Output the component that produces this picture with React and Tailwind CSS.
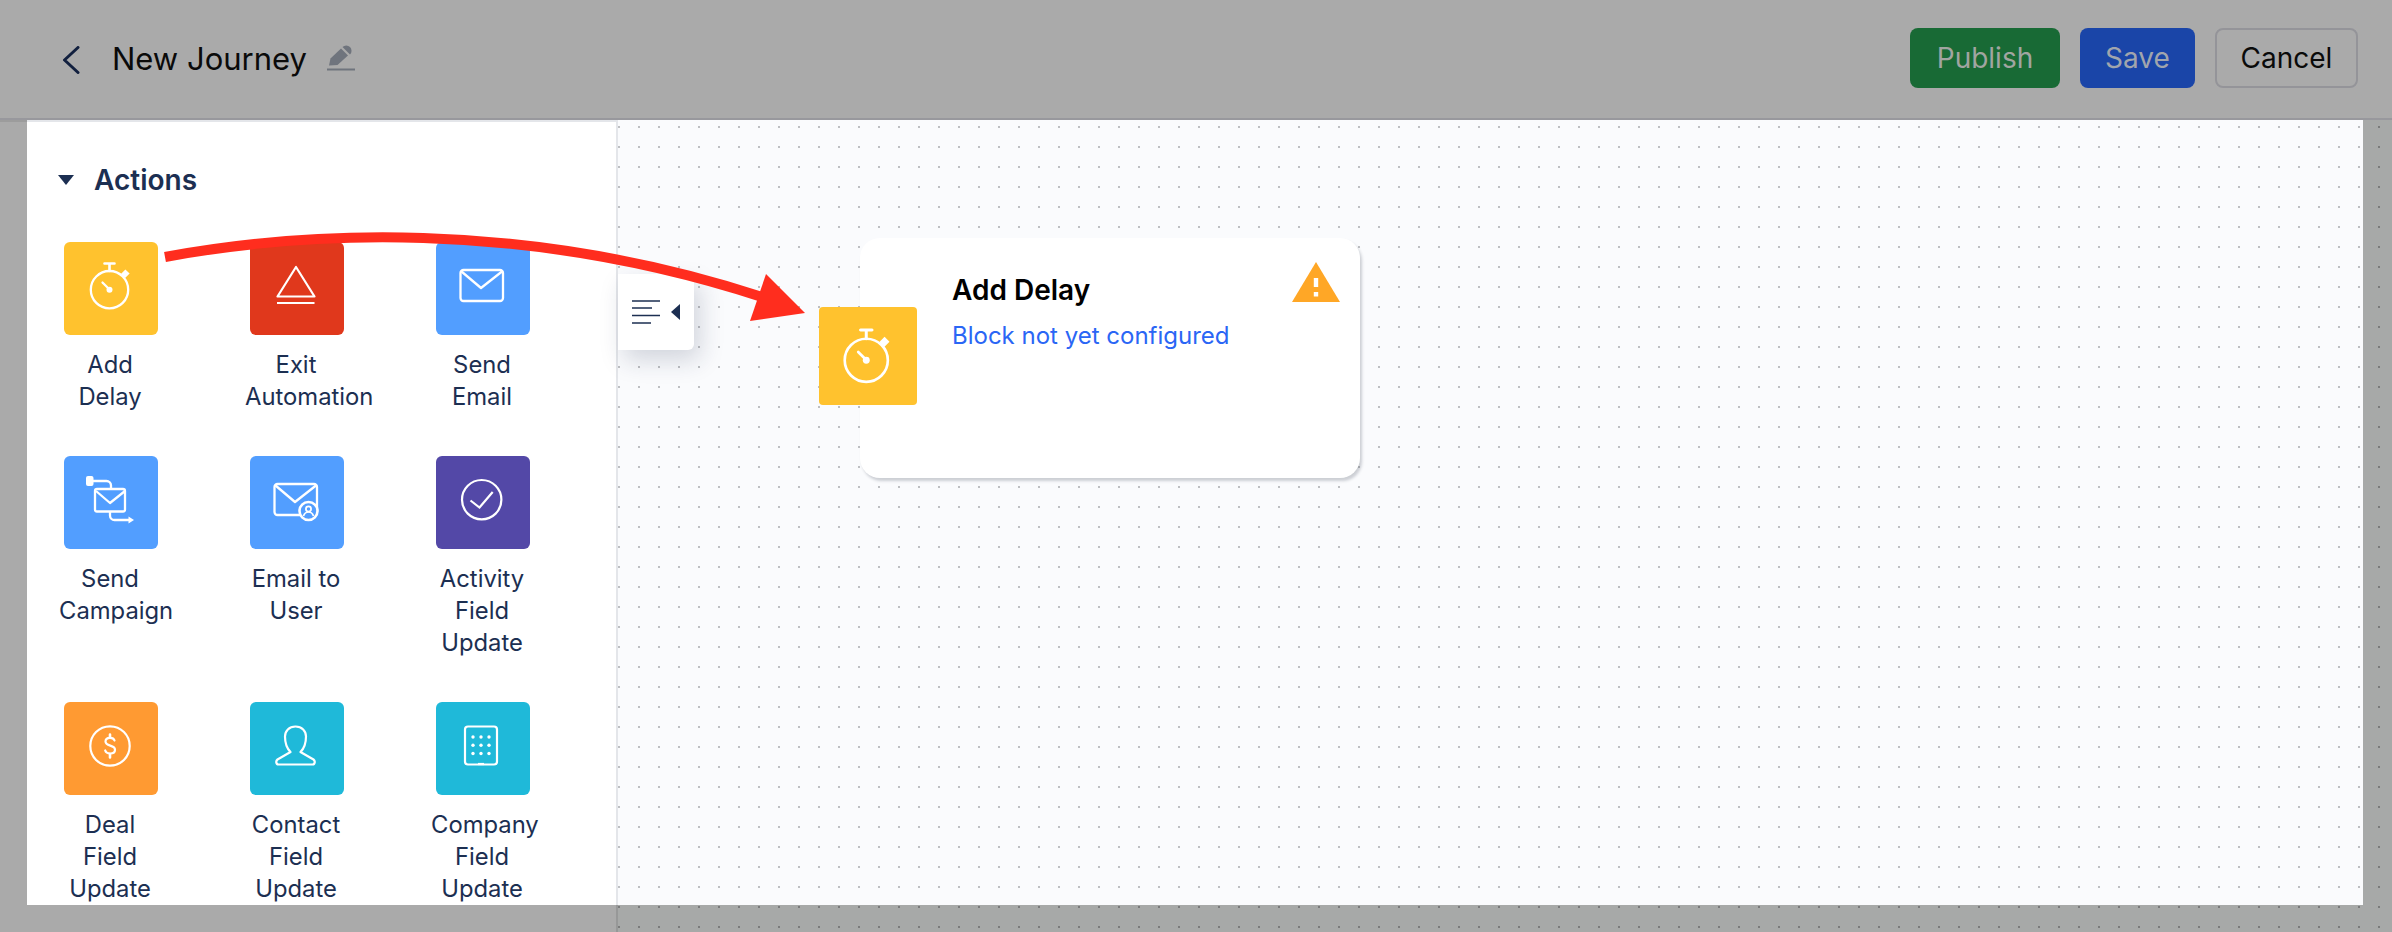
const BLUE = "bg-[#529eff]";

function Stopwatch({ viewBox = "-0.500 0 94 93" }) {
  return (
    <svg viewBox={viewBox} className="h-full w-full" fill="none" stroke="#fff" strokeWidth="2.300" strokeLinecap="round">
      <circle cx="45" cy="47.700" r="18.700" />
      <path d="M45 22v7M40 21.500h10" strokeWidth="2.600" />
      <path d="M58.500 34l4.500-4.500" strokeWidth="6" strokeLinecap="butt" />
      <path d="M38 40.500l7 7" />
      <circle cx="45" cy="47.700" r="3" fill="#fff" stroke="none" />
    </svg>
  );
}

function ExitIcon() {
  return (
    <svg viewBox="0 0 94 93" className="h-full w-full" fill="none" stroke="#fff" strokeWidth="2.200" strokeLinejoin="round">
      <path d="M46 25L27.500 54.500h37Z" />
      <path d="M27 61h37.500" />
    </svg>
  );
}

function MailIcon() {
  return (
    <svg viewBox="0 0 94 93" className="h-full w-full" fill="none" stroke="#fff" strokeWidth="2.300" strokeLinejoin="round">
      <rect x="24.500" y="28" width="42.500" height="31" rx="3" />
      <path d="M25.500 29.500L45 46 66 29.500" />
    </svg>
  );
}

function CampaignIcon() {
  return (
    <svg viewBox="0 0 94 93" className="h-full w-full" fill="none" stroke="#fff" strokeWidth="2.300" strokeLinejoin="round">
      <rect x="22" y="20" width="7.500" height="10" rx="2" fill="#fff" stroke="none" />
      <path d="M29 25h13.500a4.500 4.500 0 0 1 4.500 4.500V33" />
      <rect x="31" y="33" width="30" height="22.500" rx="2" />
      <path d="M32 35l14 12 15-12" />
      <path d="M46 55.500v4a4.500 4.500 0 0 0 4.500 4.500H66" />
      <path d="M64.500 60.500l5.500 3.500-5.500 3.500Z" fill="#fff" stroke="none" />
    </svg>
  );
}

function EmailUserIcon() {
  return (
    <svg viewBox="0 0 94 93" className="h-full w-full" fill="none" stroke="#fff" strokeWidth="2.300" strokeLinejoin="round">
      <rect x="24.500" y="28" width="42.500" height="31" rx="3" />
      <path d="M25.500 29.500L45 46 66 29.500" />
      <circle cx="58.500" cy="55" r="9" fill="#529eff" stroke="#fff" strokeWidth="2.600" />
      <circle cx="58.500" cy="53" r="2.600" strokeWidth="1.700" />
      <path d="M53.500 60c1-3 3-4 5-4s4 1 5 4" strokeWidth="1.700" />
    </svg>
  );
}

function CheckIcon() {
  return (
    <svg viewBox="0 0 94 93" className="h-full w-full" fill="none" stroke="#fff" strokeWidth="2.200">
      <circle cx="45.700" cy="43.700" r="19.700" />
      <path d="M34.500 44.500l9 7 13.200-15.500" />
    </svg>
  );
}

function DollarIcon() {
  return (
    <svg viewBox="0 0 94 93" className="h-full w-full" fill="none" stroke="#fff" strokeWidth="2.200" strokeLinecap="round">
      <circle cx="46" cy="44" r="19.700" />
      <path d="M50.500 38.500c-.5-1.700-2.200-2.700-4.500-2.700-2.700 0-4.500 1.500-4.500 3.800 0 5.300 9.500 2.800 9.500 8.100 0 2.400-2 3.800-4.800 3.800-2.500 0-4.400-1.100-5-3" />
      <path d="M46 32.500v3M46 52v3.500" strokeWidth="2.600" />
    </svg>
  );
}

function PersonIcon() {
  return (
    <svg viewBox="0 0 94 93" className="h-full w-full" fill="none" stroke="#fff" strokeWidth="2.200" strokeLinejoin="round">
      <path d="M45.500 24.500C39 24.500 35 29 35 34.500c0 6.500 1.500 11.500 5.500 15.500l-13 7.500c-2 1.500-1.500 5 1 5h34c2.500 0 3-3.500 1-5l-13-7.500c4-4 5.500-9 5.500-15.500 0-5.500-4-10-10.500-10Z" />
    </svg>
  );
}

function BuildingIcon() {
  const dots = [];
  [35, 43.300, 51.500].forEach((y) => [37, 45, 53].forEach((x) => dots.push([x, y])));
  return (
    <svg viewBox="0 0 94 93" className="h-full w-full" fill="none" stroke="#fff" strokeWidth="2.200">
      <rect x="29" y="24.500" width="32" height="38" rx="3" />
      <path d="M42 62h6" />
      {dots.map(([x, y]) => (
        <circle key={`${x}-${y}`} cx={x} cy={y} r="1.700" fill="#fff" stroke="none" />
      ))}
    </svg>
  );
}

const actions = [
  { label: "Add Delay", bg: "bg-[#ffc22e]", Icon: Stopwatch },
  { label: "Exit Automation", bg: "bg-[#e0381c]", Icon: ExitIcon },
  { label: "Send Email", bg: BLUE, Icon: MailIcon },
  { label: "Send Campaign", bg: BLUE, Icon: CampaignIcon },
  { label: "Email to User", bg: BLUE, Icon: EmailUserIcon },
  { label: "Activity Field Update", bg: "bg-[#5348a7]", Icon: CheckIcon },
  { label: "Deal Field Update", bg: "bg-[#ff9a32]", Icon: DollarIcon },
  { label: "Contact Field Update", bg: "bg-[#1fb9d9]", Icon: PersonIcon },
  { label: "Company Field Update", bg: "bg-[#1fb9d9]", Icon: BuildingIcon },
];

function ActionTile({ label, bg, Icon }) {
  return (
    <div className="flex w-[104px] flex-col items-start">
      <div className={`ml-[5px] h-[93px] w-[94px] shrink-0 rounded-[6px] ${bg}`}>
        <Icon />
      </div>
      <p className="mt-[14px] w-[102px] text-center text-[23.800px] leading-[32px] text-[#1c2f52]">{label}</p>
    </div>
  );
}

function CollapseTab() {
  return (
    <div className="absolute left-0 top-[154px] flex h-[76px] w-[76px] items-center rounded-r-[6px] bg-white pl-[14px] shadow-[6px_10px_24px_rgba(30,40,70,0.18)]">
      <svg width="50" height="24" viewBox="0 0 50 24" fill="none">
        <path d="M0 1h28M0 8h20M0 15.500h28M0 23h19" stroke="#1c2f52" strokeWidth="1.600" />
        <path d="M48 4v16l-9-8Z" fill="#1c2f52" />
      </svg>
    </div>
  );
}

function DelayCard() {
  return (
    <>
      <div className="absolute left-[242px] top-[118px] h-[240px] w-[500px] rounded-[20px] bg-white pl-[92px] pt-[34px] shadow-[2px_3px_3px_rgba(40,50,70,0.22)]">
        <p className="text-[28px] font-semibold leading-[36px] text-black">Add Delay</p>
        <p className="mt-[10px] text-[24px] leading-[36px] text-[#2a66f5]">Block not yet configured</p>
        <svg className="absolute left-[432px] top-[24px]" width="48" height="40" viewBox="0 0 48 40">
          <path d="M24 0L48 40H0Z" fill="#ffa726" />
          <path d="M21.800 16h4.400v9h-4.400ZM21.800 30h4.400v4.500h-4.400Z" fill="#fff" />
        </svg>
      </div>
      <div className="absolute left-[201px] top-[187px] h-[98px] w-[98px] rounded-[4px] bg-[#ffc22e]">
        <Stopwatch viewBox="4 2 85 84" />
      </div>
    </>
  );
}

export default function App() {
  return (
    <div className="relative flex h-[932px] w-[2392px] flex-col overflow-hidden bg-[#aaaaaa] font-['Inter',sans-serif]">
      <header className="flex h-[120px] shrink-0 items-center justify-between border-b-2 border-[#98989d] bg-[#aaaaaa] pl-[62px] pr-[34px]">
        <div className="flex items-center">
          <svg width="18" height="28" viewBox="0 0 18 28" fill="none" className="mt-px">
            <path d="M16 1.500L2.500 14 16 26.500" stroke="#12203f" strokeWidth="3" strokeLinecap="round" strokeLinejoin="round" />
          </svg>
          <h1 className="ml-[32px] text-[31px] leading-[40px] text-[#0a0a0a]">New Journey</h1>
          <svg width="28" height="28" viewBox="0 0 28 28" className="ml-[20px] -mt-[5px]">
            <path d="M2 22.500L3.500 15.500 14 5.500l7 7L10.500 22Z" fill="#6f747d" />
            <path d="M15.500 4l7.500 7.500a5.300 5.300 0 0 0-7.500-7.500Z" fill="#6f747d" />
            <path d="M0 26.500h28" stroke="#6f747d" strokeWidth="2" />
          </svg>
        </div>
        <div className="-mt-[2px] flex items-center gap-[20px]">
          <button className="h-[60px] w-[150px] rounded-[8px] bg-[#186a35] text-[28px] text-[#a1a5a1]">Publish</button>
          <button className="h-[60px] w-[115px] rounded-[8px] bg-[#1a45a8] text-[28px] text-[#a1a5ad]">Save</button>
          <button className="h-[60px] w-[143px] rounded-[8px] border-2 border-[#949499] text-[28px] text-[#0a0a0a]">Cancel</button>
        </div>
      </header>

      <div className="flex min-h-0 flex-1">
        <div className="w-[27px] shrink-0 border-t-2 border-[#9c9c9c] bg-[#aaaaaa]" />
        <aside className="w-[591px] shrink-0 overflow-hidden border-r-2 border-t-2 border-[#e4e6ea] bg-white pl-[32px]">
          <div className="flex h-[120px] items-center pb-[4px]">
            <svg width="16" height="10" viewBox="0 0 16 10" className="-ml-px">
              <path d="M0 0h16L8 10Z" fill="#1c2f52" />
            </svg>
            <h2 className="ml-[20px] text-[28px] font-semibold leading-[36px] text-[#1c2f52]">Actions</h2>
          </div>
          <div className="grid grid-cols-[104px_104px_104px] gap-x-[82px] gap-y-[43px]">
            {actions.map((action) => (
              <ActionTile key={action.label} {...action} />
            ))}
          </div>
        </aside>
        <main className="relative flex-1 bg-[#fafbfd] bg-[radial-gradient(circle_at_1px_1px,#bdbfc2_1px,transparent_1.4px)] bg-[size:20px_20px] bg-[position:0px_6px]">
          <CollapseTab />
          <DelayCard />
        </main>
        <div className="w-[29px] shrink-0 bg-[#a7a9a8] bg-[radial-gradient(circle_at_1px_1px,#7a7b7b_1px,transparent_1.4px)] bg-[size:20px_20px] bg-[position:15px_6px]" />
      </div>

      <div className="flex h-[27px] shrink-0">
        <div className="w-[618px] shrink-0 border-r-2 border-[#979898] bg-[#aaaaaa]" />
        <div className="flex-1 bg-[#a7a9a8] bg-[radial-gradient(circle_at_1px_1px,#7a7b7b_1px,transparent_1.4px)] bg-[size:20px_20px] bg-[position:0px_1px]" />
      </div>

      <svg className="pointer-events-none absolute inset-0" width="2392" height="932" fill="none">
        <path d="M165 257C300 232 520 218 762 297" stroke="#ff2d1e" strokeWidth="10" />
        <path d="M766 274L805 313 750 321Z" fill="#ff2d1e" />
      </svg>
    </div>
  );
}
